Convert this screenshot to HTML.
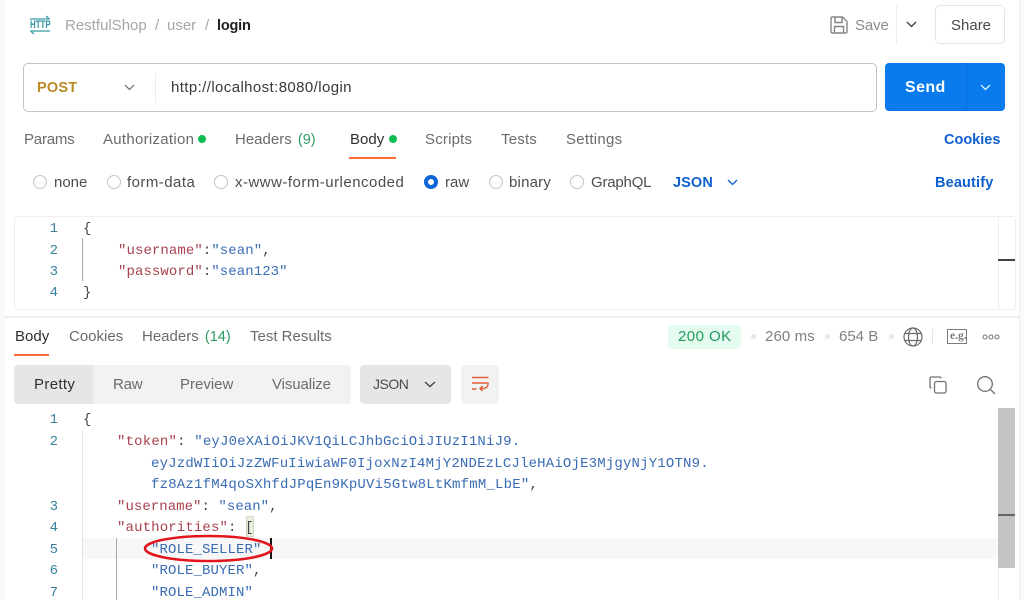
<!DOCTYPE html>
<html lang="en"><head><meta charset="utf-8"><title>RestfulShop / user / login</title>
<style>
html,body{margin:0;padding:0;width:1024px;height:600px;overflow:hidden;background:#fff}
body{position:relative;font-family:"Liberation Sans",sans-serif;font-size:15px;color:#6b6b6b}
.t{position:absolute;white-space:nowrap;line-height:20px;margin-top:1px}
.b{position:absolute;box-sizing:border-box}
.m{position:absolute;white-space:nowrap;line-height:20px;font-family:"Liberation Mono",monospace;font-size:14px;color:#3a6cb5}
.k{color:#a8424f}.p{color:#444}.n{color:#3a82a2;width:20px;text-align:right}
.blue{color:#0f5fd0;font-weight:700;font-size:14.5px}.d{color:#212121}
.r{position:absolute;box-sizing:border-box;width:14px;height:14px;border:1.5px solid #c4c4c4;border-radius:50%;top:175px}
svg{position:absolute;overflow:visible;fill:none}
</style></head><body>
<div class="b" style="left:0;top:0;width:5px;height:600px;background:#f9f9f9"></div>
<div class="b" style="left:1019px;top:0;width:5px;height:600px;background:#fafafa;border-left:1px solid #eee"></div>

<svg style="left:30px;top:15px" width="20" height="20" viewBox="0 0 20 20" stroke="#3a9aa8" stroke-width="1.3"><path d="M0 4H19.500M16 1L19.500 4M0.500 16H20M0.500 16L4 19"/></svg>
<div class="t" style="left:30px;top:14px;width:28px;font-size:11px;font-weight:700;color:#2f93a3;transform:scaleX(.72);transform-origin:0 50%">HTTP</div>
<div class="t" style="left:65px;top:15px;color:#a6a6a6">RestfulShop</div>
<div class="t" style="left:155px;top:15px;color:#a6a6a6">/</div>
<div class="t" style="left:167px;top:15px;color:#a6a6a6">user</div>
<div class="t" style="left:205px;top:15px;color:#a6a6a6">/</div>
<div class="t d" style="left:217px;top:15px;font-weight:700;font-size:14.5px;letter-spacing:-.2px">login</div>

<svg style="left:830px;top:16px" width="18" height="18" viewBox="0 0 18 18" stroke="#858585" stroke-width="1.4"><path d="M1 2.5Q1 1 2.5 1H12.5L17 5.5V15.500Q17 17 15.500 17H2.500Q1 17 1 15.500ZM5 1V6.500H12V1M4.500 17V10.500H13.500V17"/></svg>
<div class="t" style="left:855px;top:15px;color:#8c8c8c;letter-spacing:-.1px">Save</div>
<div class="b" style="left:896px;top:5px;width:1px;height:39px;background:#efefef"></div>
<svg style="left:906px;top:21px" width="11" height="7" stroke="#444" stroke-width="1.4"><path d="M1 1L5.500 5.500L10 1"/></svg>
<div class="b" style="left:935px;top:5px;width:70px;height:39px;border:1px solid #e4e4e4;border-radius:5px"></div>
<div class="t" style="left:951px;top:15px;color:#4a4a4a">Share</div>

<div class="b" style="left:23px;top:63px;width:854px;height:49px;border:1px solid #c4c4c4;border-radius:5px"></div>
<div class="t" style="left:37px;top:77px;font-weight:700;font-size:14.5px;color:#b98a25;letter-spacing:.2px">POST</div>
<svg style="left:124px;top:84px" width="11" height="7" stroke="#6b6b6b" stroke-width="1.2"><path d="M1 1L5.500 5.500L10 1"/></svg>
<div class="b" style="left:155px;top:73px;width:1px;height:30px;background:#ececec"></div>
<div class="t" style="left:171px;top:77px;color:#3a3a3a;letter-spacing:.4px">http://localhost:8080/login</div>
<div class="b" style="left:885px;top:63px;width:120px;height:48px;background:#097bed;border-radius:4px"></div>
<div class="b" style="left:966px;top:63px;width:1px;height:48px;background:#0a6fd4"></div>
<div class="t" style="left:905px;top:77px;font-size:16px;font-weight:700;color:#fff;letter-spacing:.4px">Send</div>
<svg style="left:980px;top:84px" width="11" height="7" stroke="#fff" stroke-width="1.2"><path d="M1 1L5.500 5.500L10 1"/></svg>

<div class="t" style="left:24px;top:129px;letter-spacing:-.2px">Params</div>
<div class="t" style="left:103px;top:129px;letter-spacing:.28px">Authorization</div>
<div class="b" style="left:198px;top:135px;width:8px;height:8px;border-radius:50%;background:#0cbb52"></div>
<div class="t" style="left:235px;top:129px">Headers <span style="color:#2e9a63;margin-left:2px;font-size:14.5px">(9)</span></div>
<div class="t" style="left:350px;top:129px;color:#303030">Body</div>
<div class="b" style="left:389px;top:135px;width:8px;height:8px;border-radius:50%;background:#0cbb52"></div>
<div class="b" style="left:349px;top:157px;width:47px;height:1.500px;background:#ff6c37"></div>
<div class="t" style="left:425px;top:129px;letter-spacing:.2px">Scripts</div>
<div class="t" style="left:501px;top:129px;letter-spacing:.2px">Tests</div>
<div class="t" style="left:566px;top:129px;letter-spacing:.27px">Settings</div>
<div class="t blue" style="left:944px;top:129px">Cookies</div>

<div class="r" style="left:33px"></div><div class="t" style="left:54px;top:172px;color:#4d4d4d">none</div>
<div class="r" style="left:107px"></div><div class="t" style="left:127px;top:172px;color:#4d4d4d;letter-spacing:.45px">form-data</div>
<div class="r" style="left:214px"></div><div class="t" style="left:235px;top:172px;color:#4d4d4d;letter-spacing:.48px">x-www-form-urlencoded</div>
<div class="r" style="left:424px;border:4px solid #0d66d8"></div><div class="t" style="left:445px;top:172px;color:#4d4d4d">raw</div>
<div class="r" style="left:489px"></div><div class="t" style="left:509px;top:172px;color:#4d4d4d;letter-spacing:.2px">binary</div>
<div class="r" style="left:570px"></div><div class="t" style="left:591px;top:172px;color:#4d4d4d;letter-spacing:-.2px">GraphQL</div>
<div class="t blue" style="left:673px;top:172px;letter-spacing:.1px">JSON</div>
<svg style="left:727px;top:179px" width="11" height="7" stroke="#0f5fd0" stroke-width="1.3"><path d="M1 1L5.500 5.500L10 1"/></svg>
<div class="t blue" style="left:935px;top:172px;letter-spacing:.15px">Beautify</div>

<div class="b" style="left:14px;top:216px;width:1002px;height:94px;border:1px solid #eee;border-radius:3px"></div>
<div class="b" style="left:998px;top:217px;width:1px;height:92px;background:#eee"></div>
<div class="b" style="left:998px;top:259px;width:17px;height:2px;background:#444"></div>
<div class="b" style="left:82px;top:238px;width:1px;height:43px;background:#a8a8a8"></div>
<div class="m n" style="left:38px;top:219px">1</div><div class="m p" style="left:83px;top:219px">{</div>
<div class="m n" style="left:38px;top:241px">2</div><div class="m" style="left:118px;top:241px;letter-spacing:.08px"><span class="k">"username"</span><span class="p">:</span>"sean"<span class="p">,</span></div>
<div class="m n" style="left:38px;top:262px">3</div><div class="m" style="left:118px;top:262px;letter-spacing:.08px"><span class="k">"password"</span><span class="p">:</span>"sean123"</div>
<div class="m n" style="left:38px;top:283px">4</div><div class="m p" style="left:83px;top:283px">}</div>

<div class="b" style="left:5px;top:316px;width:1014px;height:2px;background:#eee"></div>
<div class="t" style="left:15px;top:326px;color:#303030">Body</div>
<div class="b" style="left:14px;top:354px;width:35px;height:1.500px;background:#ff6c37"></div>
<div class="t" style="left:69px;top:326px">Cookies</div>
<div class="t" style="left:142px;top:326px">Headers <span style="color:#2e9a63;margin-left:2px;font-size:14.5px">(14)</span></div>
<div class="t" style="left:250px;top:326px">Test Results</div>

<div class="b" style="left:668px;top:325px;width:73px;height:24px;background:#e6fbef;border-radius:4px"></div>
<div class="t" style="left:678px;top:326px;color:#1d9a5d;letter-spacing:.45px">200 OK</div>
<div class="b" style="left:751px;top:334px;width:5px;height:5px;border-radius:50%;background:#e6e6e6"></div>
<div class="t" style="left:765px;top:326px;color:#808080;letter-spacing:.1px">260 ms</div>
<div class="b" style="left:825px;top:334px;width:5px;height:5px;border-radius:50%;background:#e6e6e6"></div>
<div class="t" style="left:839px;top:326px;color:#808080">654 B</div>
<div class="b" style="left:889px;top:334px;width:5px;height:5px;border-radius:50%;background:#e6e6e6"></div>
<svg style="left:903px;top:327px" width="20" height="20" viewBox="0 0 20 20" stroke="#6b6b6b" stroke-width="1.200"><circle cx="10" cy="10" r="9"/><ellipse cx="10" cy="10" rx="4.500" ry="9"/><path d="M1.800 6.500H18.200M1.800 13.500H18.200"/></svg>
<div class="b" style="left:932px;top:329px;width:1px;height:15px;background:#e6e6e6"></div>
<div class="b" style="left:947px;top:329px;width:20px;height:15px;border:1.300px solid #7a7a7a"></div>
<div class="t" style="left:950px;top:325px;font-family:'Liberation Serif',serif;font-size:11.5px;font-weight:700;color:#7a7a7a">e.g.</div>
<svg style="left:982px;top:333px" width="18" height="8" stroke="#777" stroke-width="1.100"><circle cx="3" cy="4" r="2"/><circle cx="9" cy="4" r="2"/><circle cx="15" cy="4" r="2"/></svg>

<div class="b" style="left:14px;top:365px;width:337px;height:39px;background:#f2f2f2;border-radius:4px"></div>
<div class="b" style="left:14px;top:365px;width:79px;height:39px;background:#e6e6e6;border-radius:4px 0 0 4px"></div>
<div class="t" style="left:34px;top:374px;color:#303030;letter-spacing:.35px">Pretty</div>
<div class="t" style="left:113px;top:374px;letter-spacing:-.2px">Raw</div>
<div class="t" style="left:180px;top:374px">Preview</div>
<div class="t" style="left:272px;top:374px;letter-spacing:-.1px">Visualize</div>
<div class="b" style="left:360px;top:365px;width:91px;height:39px;background:#e6e6e6;border-radius:4px"></div>
<div class="t" style="left:373px;top:373px;color:#4a4a4a;font-size:14px;letter-spacing:-.5px">JSON</div>
<svg style="left:424px;top:381px" width="12" height="7" stroke="#444" stroke-width="1.400"><path d="M1 1L6 5.500L11 1"/></svg>
<div class="b" style="left:461px;top:365px;width:38px;height:39px;background:#f2f2f2;border-radius:4px"></div>
<svg style="left:471px;top:376px" width="18" height="17" viewBox="0 0 18 17" stroke="#e0603a" stroke-width="1.400"><path d="M1 1.500H17.500M1 7H17Q17.500 12 12 12.500H9M11.500 10L9 12.500L11.500 15M1 13H5.500"/></svg>
<svg style="left:929px;top:376px" width="18" height="18" viewBox="0 0 18 18" stroke="#707070" stroke-width="1.300"><rect x="5.500" y="5.500" width="11.500" height="11.500" rx="2"/><path d="M12 2.500Q12 1 10.500 1H2.500Q1 1 1 2.500V10.500Q1 12 2.500 12"/></svg>
<svg style="left:977px;top:376px" width="19" height="19" viewBox="0 0 19 19" stroke="#707070" stroke-width="1.300"><circle cx="8" cy="8" r="7.300"/><path d="M13.300 13.300L18 18"/></svg>

<div class="b" style="left:82px;top:538px;width:916px;height:21px;background:#f7f7f7"></div>
<div class="b" style="left:998px;top:408px;width:1px;height:192px;background:#eee"></div>
<div class="b" style="left:998px;top:408px;width:17px;height:160px;background:#c4c4c4"></div>
<div class="b" style="left:998px;top:514px;width:17px;height:2px;background:#666"></div>
<div class="b" style="left:82px;top:430px;width:1px;height:170px;background:#e2e2e2"></div>
<div class="b" style="left:116px;top:538px;width:1px;height:62px;background:#a8a8a8"></div>
<div class="b" style="left:246px;top:516px;width:8px;height:21px;background:#e9f0dd;border:1px solid #cfd6c4"></div>
<div class="b" style="left:270px;top:538px;width:2px;height:21px;background:#111"></div>

<div class="m n" style="left:38px;top:410px">1</div><div class="m p" style="left:83px;top:410px">{</div>
<div class="m n" style="left:38px;top:432px">2</div><div class="m" style="left:117px;top:432px;letter-spacing:.18px"><span class="k">"token"</span><span class="p">: </span>"eyJ0eXAiOiJKV1QiLCJhbGciOiJIUzI1NiJ9.</div>
<div class="m" style="left:151px;top:454px;letter-spacing:.18px">eyJzdWIiOiJzZWFuIiwiaWF0IjoxNzI4MjY2NDEzLCJleHAiOjE3MjgyNjY1OTN9.</div>
<div class="m" style="left:151px;top:475px;letter-spacing:.2px">fz8Az1fM4qoSXhfdJPqEn9KpUVi5Gtw8LtKmfmM_LbE"<span class="p">,</span></div>
<div class="m n" style="left:38px;top:497px">3</div><div class="m" style="left:117px;top:497px;letter-spacing:.05px"><span class="k">"username"</span><span class="p">: </span>"sean"<span class="p">,</span></div>
<div class="m n" style="left:38px;top:518px">4</div><div class="m" style="left:117px;top:518px;letter-spacing:.14px"><span class="k">"authorities"</span><span class="p">: [</span></div>
<div class="m n" style="left:38px;top:540px">5</div><div class="m" style="left:151px;top:540px;letter-spacing:.1px">"ROLE_SELLER"</div>
<div class="m n" style="left:38px;top:561px">6</div><div class="m" style="left:151px;top:561px;letter-spacing:.1px">"ROLE_BUYER"<span class="p">,</span></div>
<div class="m n" style="left:38px;top:583px">7</div><div class="m" style="left:151px;top:583px;letter-spacing:.1px">"ROLE_ADMIN"</div>

<svg style="left:0;top:0" width="1024" height="600"><ellipse cx="208.500" cy="548.500" rx="63.500" ry="12.500" stroke="#e2141c" stroke-width="2.600"/></svg>
</body></html>
